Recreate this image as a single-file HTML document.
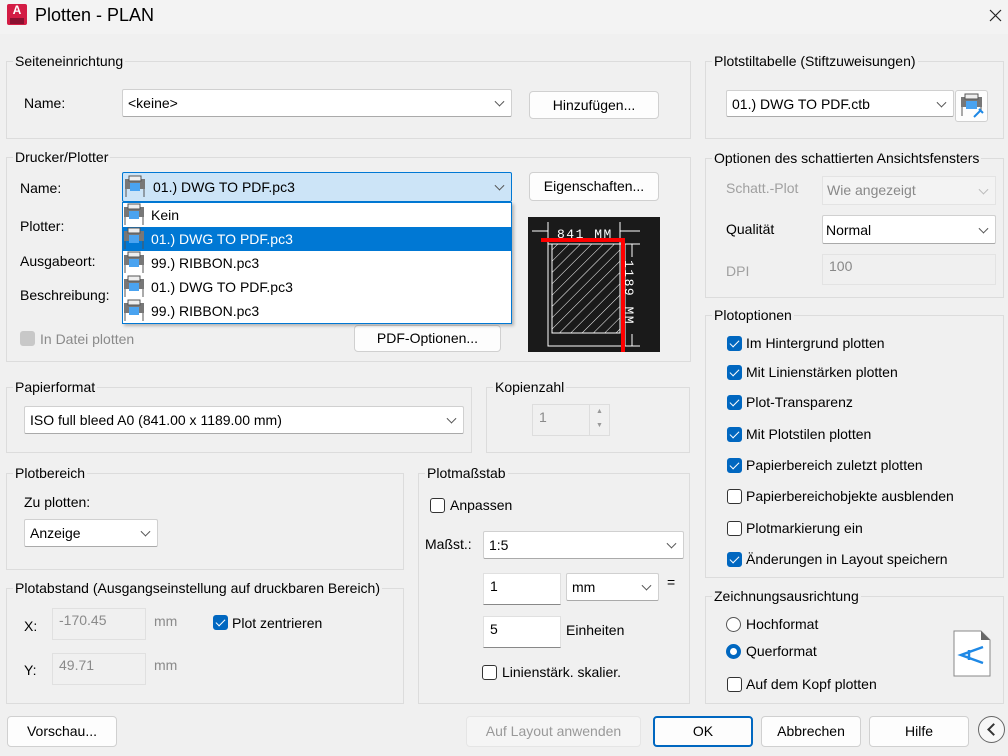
<!DOCTYPE html>
<html><head><meta charset="utf-8"><style>
*{box-sizing:border-box;margin:0;padding:0}
body{width:1008px;height:756px;background:#f0f0f0;font-family:"Liberation Sans",sans-serif;font-size:14px;color:#000;position:relative;overflow:hidden}
.a{position:absolute;white-space:nowrap}
.g{position:absolute;border:1px solid #dcdcdc}
.lg{position:absolute;background:#f0f0f0;padding:0 2px;line-height:16px;top:-9px;left:6px}
.cb{position:absolute;background:#fff;border:1px solid #d0d0d0;border-bottom-color:#aaa;border-radius:2px}
.cb span{position:absolute;left:5px;top:50%;transform:translateY(-50%)}
.ch{position:absolute;right:8px;top:50%;width:7px;height:7px;border-right:1px solid #555;border-bottom:1px solid #555;transform:translateY(-70%) rotate(45deg)}
.bt{position:absolute;background:#fdfdfd;border:1px solid #d0d0d0;border-radius:4px;text-align:center}
.ck{position:absolute;width:15px;height:15px;border:1px solid #333;border-radius:3px;background:#fff}
.ck.on{background:#0067c0;border-color:#0067c0}
.ck.on:after{content:"";position:absolute;left:4px;top:1px;width:4px;height:8px;border-right:1.5px solid #fff;border-bottom:1.5px solid #fff;transform:rotate(45deg)}
.in{position:absolute;background:#fff;border:1px solid #e0e0e0;border-bottom:1px solid #888}
.dis{color:#8a8a8a}
</style></head><body>
<div class="a" style="left:0;top:0;width:1008px;height:34px;background:#f3f3f3"></div>
<div class="a" style="left:7px;top:4px;width:20px;height:21px;background:#d31c44;border-radius:2px"><div style="color:#fff;font-weight:bold;font-size:12px;text-align:center;line-height:13px">A</div><div style="background:#8a1030;height:6px;margin:1px 3px 0"></div></div>
<div class="a" style="left:35px;top:5px;font-size:18px">Plotten - PLAN</div>
<svg class="a" style="left:989px;top:9px" width="13" height="13"><path d="M1 1L12 12M12 1L1 12" stroke="#222" stroke-width="1.2"/></svg>

<svg width="0" height="0" style="position:absolute"><defs><g id="p"><rect x="1" y="4" width="20" height="10" fill="#777"/><rect x="5" y="1" width="12" height="5" fill="#eee" stroke="#555"/><rect x="6" y="8" width="10" height="8" fill="#4aa3f0"/><line x1="2" y1="14" x2="2" y2="22" stroke="#555"/><line x1="20" y1="14" x2="20" y2="22" stroke="#555"/></g></defs></svg>

<!-- Seiteneinrichtung -->
<div class="g" style="left:6px;top:61px;width:685px;height:78px"><div class="lg">Seiteneinrichtung</div></div>
<div class="a" style="left:24px;top:95px">Name:</div>
<div class="cb" style="left:122px;top:89px;width:390px;height:28px"><span>&lt;keine&gt;</span><i class="ch"></i></div>
<div class="bt" style="left:529px;top:91px;width:130px;height:28px;line-height:26px">Hinzufügen...</div>

<!-- Drucker -->
<div class="g" style="left:6px;top:157px;width:685px;height:205px"><div class="lg">Drucker/Plotter</div></div>
<div class="a" style="left:20px;top:180px">Name:</div>
<div class="a" style="left:20px;top:218px">Plotter:</div>
<div class="a" style="left:20px;top:253px">Ausgabeort:</div>
<div class="a" style="left:20px;top:287px">Beschreibung:</div>
<div class="ck" style="left:20px;top:331px;background:#c8c8c8;border-color:#c8c8c8"></div>
<div class="a dis" style="left:40px;top:331px">In Datei plotten</div>
<div class="bt" style="left:354px;top:325px;width:147px;height:27px;line-height:25px">PDF-Optionen...</div>
<div class="cb" style="left:122px;top:172px;width:390px;height:30px;background:#cce4f7;border:1px solid #0078d4"><span style="left:30px">01.) DWG TO PDF.pc3</span><i class="ch"></i></div>
<div class="bt" style="left:529px;top:172px;width:130px;height:29px;line-height:27px">Eigenschaften...</div>
<div class="a" style="left:122px;top:202px;width:390px;height:122px;background:#fff;border:1px solid #0078d4;box-shadow:2px 2px 3px rgba(0,0,0,.25)">
 <div style="position:absolute;left:0;top:24px;width:388px;height:24px;background:#0078d4"></div>
 <div class="a" style="left:28px;top:4px">Kein</div>
 <div class="a" style="left:28px;top:28px;color:#fff">01.) DWG TO PDF.pc3</div>
 <div class="a" style="left:28px;top:52px">99.) RIBBON.pc3</div>
 <div class="a" style="left:28px;top:76px">01.) DWG TO PDF.pc3</div>
 <div class="a" style="left:28px;top:100px">99.) RIBBON.pc3</div>
</div>
<svg class="a" style="left:124px;top:175px" width="22" height="24"><use href="#p"/></svg>
<svg class="a" style="left:123px;top:203px" width="22" height="120"><use href="#p"/><use href="#p" y="24"/><use href="#p" y="48"/><use href="#p" y="72"/><use href="#p" y="96"/></svg>
<!-- preview -->
<svg class="a" style="left:528px;top:217px" width="132" height="135" viewBox="0 0 132 135">
<rect width="132" height="135" fill="#1a1a1a"/>
<defs><pattern id="h" width="8" height="8" patternUnits="userSpaceOnUse" patternTransform="rotate(45)"><line x1="0" y1="0" x2="0" y2="8" stroke="#fff" stroke-width="1"/></pattern></defs>
<rect x="20" y="27" width="77" height="102" fill="none" stroke="#fff"/>
<rect x="24" y="27" width="68" height="89" fill="url(#h)" stroke="#fff"/>
<line x1="4" y1="14" x2="20" y2="14" stroke="#fff"/><line x1="92" y1="14" x2="112" y2="14" stroke="#fff"/>
<line x1="20" y1="5" x2="20" y2="27" stroke="#fff"/><line x1="92" y1="5" x2="92" y2="27" stroke="#fff"/>
<text x="29" y="21" fill="#fff" font-family="Liberation Mono" font-size="13" letter-spacing="1.5">841 MM</text>
<line x1="92" y1="27" x2="112" y2="27" stroke="#fff"/><line x1="92" y1="129" x2="112" y2="129" stroke="#fff"/>
<line x1="104" y1="27" x2="104" y2="40" stroke="#fff"/><line x1="104" y1="117" x2="104" y2="129" stroke="#fff"/>
<text transform="translate(97,43) rotate(90)" fill="#fff" font-family="Liberation Mono" font-size="13" letter-spacing="1.5">1189 MM</text>
<path d="M13 23H95V135" fill="none" stroke="#f00" stroke-width="4"/>
</svg>

<!-- Papierformat -->
<div class="g" style="left:6px;top:387px;width:466px;height:66px"><div class="lg">Papierformat</div></div>
<div class="cb" style="left:24px;top:406px;width:440px;height:28px"><span>ISO full bleed A0 (841.00 x 1189.00 mm)</span><i class="ch"></i></div>
<div class="g" style="left:486px;top:387px;width:204px;height:66px"><div class="lg">Kopienzahl</div></div>
<div class="a" style="left:532px;top:404px;width:78px;height:32px;border:1px solid #ddd;background:#f0f0f0"><span class="a dis" style="left:6px;top:4px">1</span><div style="position:absolute;right:0;top:0;width:20px;height:30px;border-left:1px solid #ddd;font-size:7px;color:#999;text-align:center;line-height:14px">▲<br>▼</div></div>

<!-- Plotbereich -->
<div class="g" style="left:6px;top:473px;width:398px;height:97px"><div class="lg">Plotbereich</div></div>
<div class="a" style="left:24px;top:494px">Zu plotten:</div>
<div class="cb" style="left:24px;top:519px;width:134px;height:28px"><span>Anzeige</span><i class="ch"></i></div>
<div class="g" style="left:6px;top:588px;width:398px;height:116px"><div class="lg">Plotabstand (Ausgangseinstellung auf druckbaren Bereich)</div></div>
<div class="a" style="left:24px;top:618px">X:</div>
<div class="a" style="left:52px;top:608px;width:94px;height:32px;border:1px solid #e0e0e0;background:#f0f0f0"><span class="a dis" style="left:6px;top:3px">-170.45</span></div>
<div class="a dis" style="left:154px;top:613px">mm</div>
<div class="ck on" style="left:213px;top:615px"></div>
<div class="a" style="left:232px;top:615px">Plot zentrieren</div>
<div class="a" style="left:24px;top:662px">Y:</div>
<div class="a" style="left:52px;top:653px;width:94px;height:32px;border:1px solid #e0e0e0;background:#f0f0f0"><span class="a dis" style="left:6px;top:3px">49.71</span></div>
<div class="a dis" style="left:154px;top:657px">mm</div>

<!-- Plotmaßstab -->
<div class="g" style="left:418px;top:473px;width:272px;height:231px"><div class="lg">Plotmaßstab</div></div>
<div class="ck" style="left:430px;top:498px"></div>
<div class="a" style="left:450px;top:497px">Anpassen</div>
<div class="a" style="left:425px;top:536px">Maßst.:</div>
<div class="cb" style="left:483px;top:531px;width:201px;height:28px"><span>1:5</span><i class="ch"></i></div>
<div class="in" style="left:483px;top:573px;width:78px;height:32px"><span class="a" style="left:6px;top:4px">1</span></div>
<div class="cb" style="left:566px;top:573px;width:93px;height:28px"><span>mm</span><i class="ch"></i></div>
<div class="a" style="left:667px;top:574px">=</div>
<div class="in" style="left:483px;top:616px;width:78px;height:32px"><span class="a" style="left:6px;top:4px">5</span></div>
<div class="a" style="left:566px;top:622px">Einheiten</div>
<div class="ck" style="left:482px;top:665px"></div>
<div class="a" style="left:502px;top:664px">Linienstärk. skalier.</div>

<!-- right column -->
<div class="g" style="left:705px;top:61px;width:299px;height:78px"><div class="lg">Plotstiltabelle (Stiftzuweisungen)</div></div>
<div class="cb" style="left:726px;top:90px;width:228px;height:27px"><span>01.) DWG TO PDF.ctb</span><i class="ch"></i></div>
<div class="bt" style="left:955px;top:90px;width:33px;height:32px;border-radius:3px"><svg width="31" height="30" viewBox="0 0 31 30"><rect x="5" y="6" width="21" height="10" fill="#777"/><rect x="9" y="3" width="13" height="5" fill="#eee" stroke="#555"/><rect x="10" y="10" width="11" height="8" fill="#4aa3f0"/><path d="M6 16V25M25 16V20" stroke="#555"/><path d="M18 26L25 19M23 18L27 22" stroke="#1e88e5" stroke-width="2"/></svg></div>

<div class="g" style="left:705px;top:158px;width:299px;height:140px"><div class="lg">Optionen des schattierten Ansichtsfensters</div></div>
<div class="a dis" style="left:726px;top:180px;color:#a0a0a0">Schatt.-Plot</div>
<div class="a" style="left:822px;top:176px;width:174px;height:29px;border:1px solid #e3e3e3;background:#f3f3f3"><span class="a" style="left:4px;top:5px;color:#888">Wie angezeigt</span><i class="ch" style="border-color:#bbb"></i></div>
<div class="a" style="left:726px;top:221px">Qualität</div>
<div class="cb" style="left:822px;top:215px;width:174px;height:29px"><span style="left:3px">Normal</span><i class="ch"></i></div>
<div class="a" style="left:726px;top:263px;color:#a0a0a0">DPI</div>
<div class="a" style="left:822px;top:254px;width:174px;height:31px;border:1px solid #e3e3e3;background:#f0f0f0"><span class="a" style="left:6px;top:3px;color:#888">100</span></div>

<div class="g" style="left:705px;top:315px;width:299px;height:263px"><div class="lg">Plotoptionen</div></div>
<div class="ck on" style="left:727px;top:336px"></div><div class="a" style="left:746px;top:335px">Im Hintergrund plotten</div>
<div class="ck on" style="left:727px;top:365px"></div><div class="a" style="left:746px;top:364px">Mit Linienstärken plotten</div>
<div class="ck on" style="left:727px;top:395px"></div><div class="a" style="left:746px;top:394px">Plot-Transparenz</div>
<div class="ck on" style="left:727px;top:427px"></div><div class="a" style="left:746px;top:426px">Mit Plotstilen plotten</div>
<div class="ck on" style="left:727px;top:458px"></div><div class="a" style="left:746px;top:457px">Papierbereich zuletzt plotten</div>
<div class="ck" style="left:727px;top:489px"></div><div class="a" style="left:746px;top:488px">Papierbereichobjekte ausblenden</div>
<div class="ck" style="left:727px;top:521px"></div><div class="a" style="left:746px;top:520px">Plotmarkierung ein</div>
<div class="ck on" style="left:727px;top:552px"></div><div class="a" style="left:746px;top:551px">Änderungen in Layout speichern</div>

<div class="g" style="left:705px;top:596px;width:299px;height:108px"><div class="lg">Zeichnungsausrichtung</div></div>
<div class="a" style="left:726px;top:617px;width:15px;height:15px;border:1px solid #555;border-radius:50%;background:#fff"></div><div class="a" style="left:746px;top:616px">Hochformat</div>
<div class="a" style="left:726px;top:644px;width:15px;height:15px;border-radius:50%;background:#0067c0"><div style="position:absolute;left:4px;top:4px;width:7px;height:7px;border-radius:50%;background:#fff"></div></div><div class="a" style="left:746px;top:643px">Querformat</div>
<div class="ck" style="left:727px;top:677px"></div><div class="a" style="left:746px;top:676px">Auf dem Kopf plotten</div>
<svg class="a" style="left:953px;top:630px" width="38" height="47" viewBox="0 0 38 47"><path d="M1 1H28L37 10V46H1Z" fill="#fff" stroke="#888"/><path d="M28 1V10H37Z" fill="#666"/><path d="M30 17L8 25L30 33M16 20V30" fill="none" stroke="#1e88e5" stroke-width="2.5"/></svg>

<!-- buttons -->
<div class="bt" style="left:7px;top:716px;width:110px;height:31px;line-height:29px">Vorschau...</div>
<div class="bt" style="left:466px;top:716px;width:175px;height:31px;line-height:29px;color:#999;background:#f5f5f5;border-color:#e5e5e5">Auf Layout anwenden</div>
<div class="bt" style="left:653px;top:716px;width:100px;height:31px;line-height:27px;border:2px solid #0067c0">OK</div>
<div class="bt" style="left:761px;top:716px;width:100px;height:31px;line-height:29px">Abbrechen</div>
<div class="bt" style="left:869px;top:716px;width:100px;height:31px;line-height:29px">Hilfe</div>
<div class="a" style="left:978px;top:716px;width:27px;height:27px;border:1px solid #666;border-radius:50%;background:#f7f7f7"><div style="position:absolute;left:10px;top:8px;width:9px;height:9px;border-left:2px solid #333;border-bottom:2px solid #333;transform:rotate(45deg)"></div></div>
</body></html>
